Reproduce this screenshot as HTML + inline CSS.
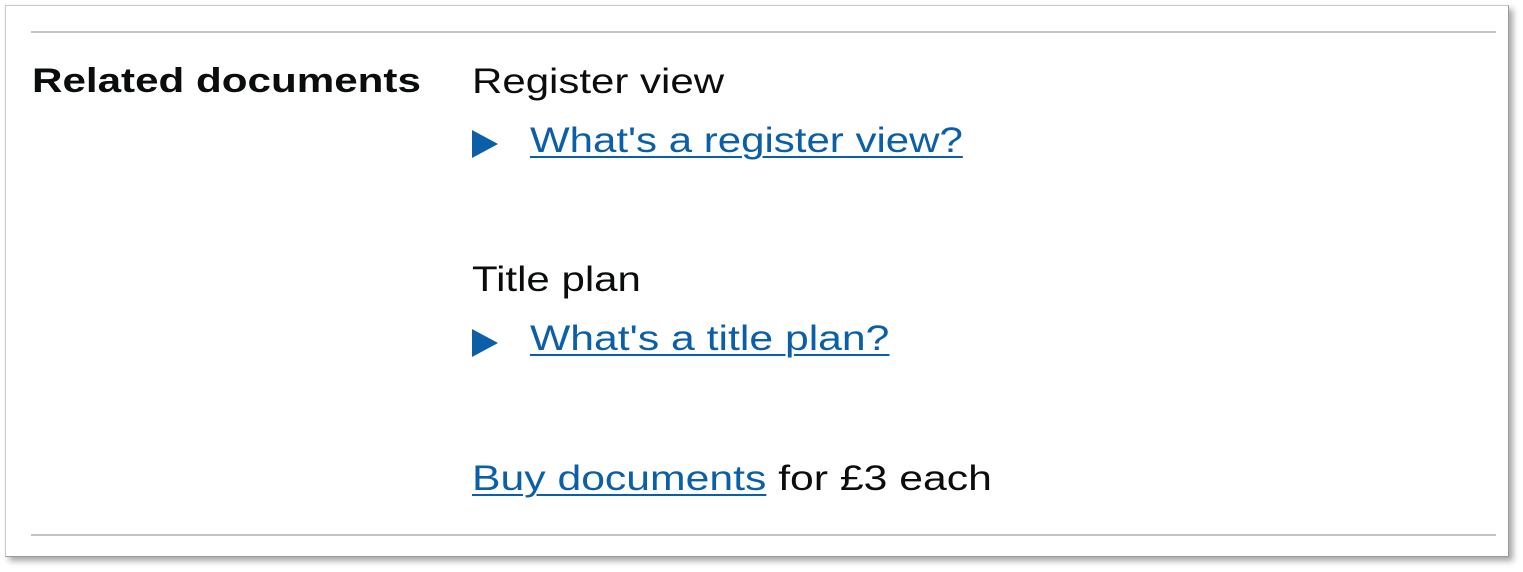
<!DOCTYPE html>
<html><head><style>
body{margin:0;width:1523px;height:572px;background:#fff;position:relative;overflow:hidden;font-family:"Liberation Sans",sans-serif;color:#0b0c0c}
.card{position:absolute;left:5px;top:5px;width:1502px;height:550px;border:1px solid #c8c8c8;border-right-color:#999;border-bottom-color:#999;box-shadow:4px 4px 6px rgba(0,0,0,.35);background:#fff}
.hr{position:absolute;left:31px;width:1465px;height:2px;background:#c4c4c4}
.t{position:absolute;white-space:nowrap;font-size:35px;line-height:1;transform:scaleX(1.2);transform-origin:0 0}
a{color:#0b5fa8;text-decoration:underline;text-decoration-thickness:2px;text-underline-offset:4px}
.tri{position:absolute;width:0;height:0;border-top:14px solid transparent;border-bottom:14px solid transparent;border-left:26px solid #0b5fa8}
</style></head><body>
<div class="card"></div>
<div class="hr" style="top:31px"></div>
<div class="hr" style="top:534px"></div>
<div class="t" style="left:32px;top:64px;font-weight:bold;font-size:34px;transform:scaleX(1.24)">Related documents</div>
<div class="t" style="left:472px;top:64px">Register view</div>
<div class="tri" style="left:472px;top:130px"></div>
<div class="t" style="left:530px;top:123px"><a>What's a register view?</a></div>
<div class="t" style="left:472px;top:262px">Title plan</div>
<div class="tri" style="left:472px;top:329px"></div>
<div class="t" style="left:530px;top:321px;transform:scaleX(1.22)"><a>What's a title plan?</a></div>
<div class="t" style="left:472px;top:461px;transform:scaleX(1.22)"><a>Buy documents</a> for £3 each</div>
</body></html>
